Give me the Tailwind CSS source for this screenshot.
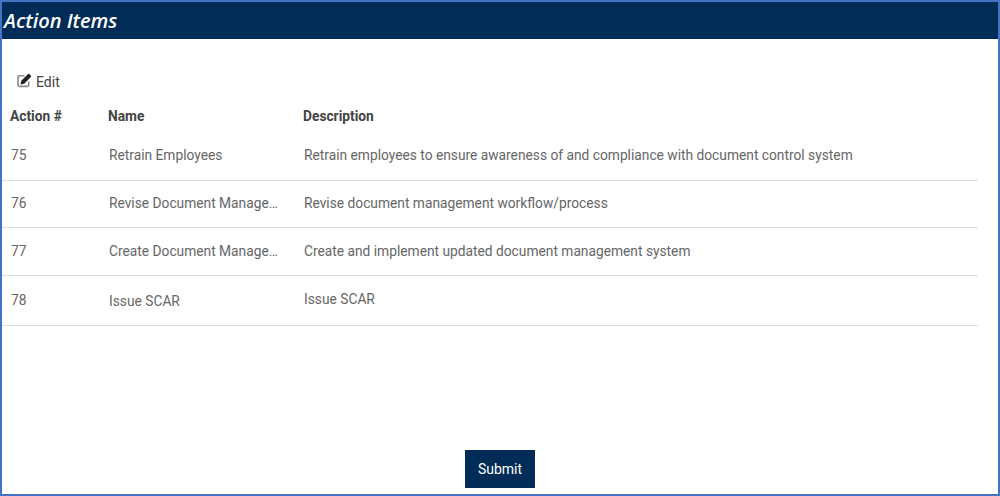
<!DOCTYPE html>
<html lang="en">
<head>
    <meta charset="UTF-8">
    <meta name="viewport" content="width=device-width, initial-scale=1.0">
    <title>Action Items</title>
    <script src="https://cdn.jsdelivr.net/npm/@tailwindcss/browser@4"></script>
</head>
<body class="bg-white overflow-hidden">
<div class="flex flex-col w-[1000px] h-[496px] border-2 border-[#4472c4] font-['Roboto',sans-serif] text-[13.78px] text-[#666666]">
    <div class="flex items-center h-[37px] shrink-0 bg-[#002c57] pl-[2px]">
        <h1 class="font-['Open_Sans',sans-serif] italic font-semibold text-[20px] text-white">Action Items</h1>
    </div>

    <div class="flex items-center gap-[4px] h-[24px] mt-[31px] pl-[15px] text-[14px] text-[#444444]">
        <svg class="w-[15px] h-[15px] mb-[4px]" viewBox="0 0 14 14">
            <path d="M7 2.5H2.2A1.2 1.2 0 0 0 1 3.7v7.6a1.2 1.2 0 0 0 1.2 1.2h7.6a1.2 1.2 0 0 0 1.2-1.2V8" fill="none" stroke="#8a8a8a" stroke-width="1.5"/>
            <path d="M4 7.3 10.4.9a.8.8 0 0 1 1.1 0l1.6 1.6a.8.8 0 0 1 0 1.1L6.7 10l-3.4.7z" fill="#222222"/>
        </svg>
        <span>Edit</span>
    </div>

    <div class="grid grid-cols-[98px_195px_1fr] items-center w-[976px] h-[24px] mt-[10px] pl-[8px] font-bold text-[#444444]">
        <div>Action #</div>
        <div>Name</div>
        <div>Description</div>
    </div>

    <div class="w-[976px] mt-[4px]">
        <div class="grid grid-cols-[107px_195px_1fr] h-[49px] pt-[13px] border-b border-[#dddddd]">
            <div class="pl-[9px] leading-[20px]">75</div>
            <div class="leading-[20px]">Retrain Employees</div>
            <div class="leading-[20px]">Retrain employees to ensure awareness of and compliance with document control system</div>
        </div>
        <div class="grid grid-cols-[107px_195px_1fr] h-[47px] pt-[12px] border-b border-[#dddddd]">
            <div class="pl-[9px] leading-[20px]">76</div>
            <div class="leading-[20px] truncate pr-[17px]">Revise Document Management</div>
            <div class="leading-[20px]">Revise document management workflow/process</div>
        </div>
        <div class="grid grid-cols-[107px_195px_1fr] h-[48px] pt-[13px] border-b border-[#dddddd]">
            <div class="pl-[9px] leading-[20px]">77</div>
            <div class="leading-[20px] truncate pr-[17px]">Create Document Management</div>
            <div class="leading-[20px]">Create and implement updated document management system</div>
        </div>
        <div class="grid grid-cols-[107px_195px_1fr] h-[50px] pt-[14px] border-b border-[#dddddd]">
            <div class="pl-[9px] leading-[20px]">78</div>
            <div class="leading-[20px] mt-[1px]">Issue SCAR</div>
            <div class="leading-[20px] -mt-[1px]">Issue SCAR</div>
        </div>
    </div>

    <div class="flex justify-center mt-auto mb-[6px]">
        <button class="w-[70px] h-[38px] bg-[#002c57] text-white text-[14px]">Submit</button>
    </div>
</div>
</body>
</html>
